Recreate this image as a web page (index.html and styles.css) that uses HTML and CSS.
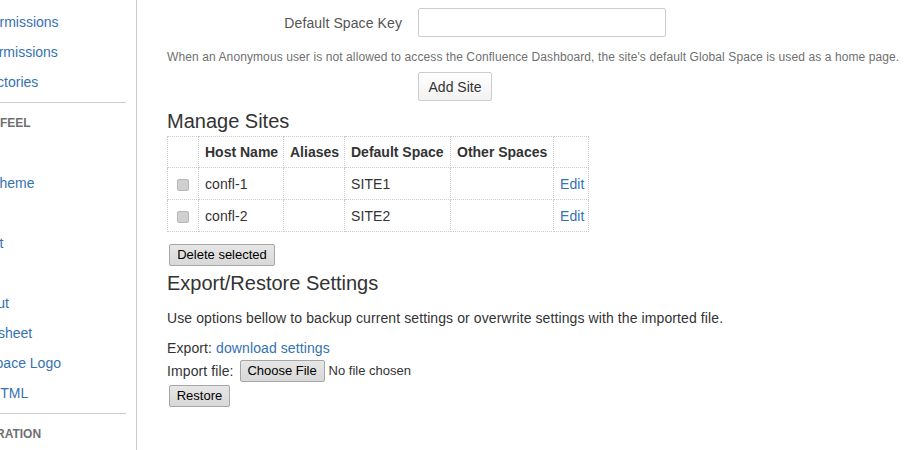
FILE: index.html
```html
<!DOCTYPE html>
<html lang="en">
<head>
  <meta charset="UTF-8"/>
  <title>Site Homepage Settings</title>
  <link rel="stylesheet" href="styles.css">
</head>
<body>
  <div class="page">
    <div class="sidebar">
      <div class="nav">
        <a class="nav-item" href="#">Security Configuration</a>
        <a class="nav-item" href="#">Global Permissions</a>
        <a class="nav-item" href="#">Space Permissions</a>
        <a class="nav-item" href="#">User Directories</a>
        <div class="nav-sep"></div>
        <div class="nav-head look">LOOK AND FEEL</div>
        <a class="nav-item" href="#">Themes</a>
        <a class="nav-item" href="#">Colour Scheme</a>
        <a class="nav-item" href="#">Layouts</a>
        <a class="nav-item" href="#">Stylesheet</a>
        <a class="nav-item" href="#">Site Logo</a>
        <a class="nav-item pdf" href="#">PDF Layout</a>
        <a class="nav-item pdf" href="#">PDF Stylesheet</a>
        <a class="nav-item" href="#">Default Space Logo</a>
        <a class="nav-item" href="#">Custom HTML</a>
        <div class="nav-sep"></div>
        <div class="nav-head">ADMINISTRATION</div>
      </div>
    </div>

    <div class="main">
      <div class="field">
        <label for="spaceKey">Default Space Key</label>
        <input type="text" id="spaceKey">
      </div>
      <div class="desc">When an Anonymous user is not allowed to access the Confluence Dashboard, the site's default Global Space is used as a home page.</div>
      <div class="add-row">
        <button class="aui-btn">Add Site</button>
      </div>

      <h2>Manage Sites</h2>
      <table class="sites">
        <colgroup>
          <col class="c-check">
          <col class="c-host">
          <col class="c-alias">
          <col class="c-space">
          <col class="c-other">
          <col class="c-edit">
        </colgroup>
        <tr>
          <th class="check"></th>
          <th>Host Name</th>
          <th>Aliases</th>
          <th>Default Space</th>
          <th>Other Spaces</th>
          <th></th>
        </tr>
        <tr>
          <td class="check"><span class="box"></span></td>
          <td>confl-1</td>
          <td></td>
          <td>SITE1</td>
          <td></td>
          <td><a href="#">Edit</a></td>
        </tr>
        <tr>
          <td class="check"><span class="box"></span></td>
          <td>confl-2</td>
          <td></td>
          <td>SITE2</td>
          <td></td>
          <td><a href="#">Edit</a></td>
        </tr>
      </table>
      <button class="native-btn delete-btn">Delete selected</button>

      <h2 class="export-title">Export/Restore Settings</h2>
      <p class="intro">Use options bellow to backup current settings or overwrite settings with the imported file.</p>
      <div class="line">Export: <a href="#">download settings</a></div>
      <div class="line import">
        Import file:
        <button class="native-btn choose-btn">Choose File</button>
        <span class="no-file">No file chosen</span>
      </div>
      <button class="native-btn restore-btn">Restore</button>
    </div>
  </div>
</body>
</html>
```

FILE: styles.css
```css
body {
  margin: 0;
  font-family: 'Liberation Sans', Arial, sans-serif;
  font-size: 14px;
  color: #333;
  background: #fff;
}
a {
  color: #3572b0;
  text-decoration: none;
}
.page {
  display: flex;
  height: 450px;
  overflow: hidden;
}

/* sidebar, scrolled and clipped on the left */
.sidebar {
  width: 136px;
  flex-shrink: 0;
  border-right: 1px solid #ccc;
  overflow: hidden;
}
.nav {
  width: 188px;
  margin-left: -62px;
  margin-top: -23px;
}
.nav-item {
  display: block;
  height: 30px;
  line-height: 30px;
  white-space: nowrap;
}
.nav-item.pdf {
  text-indent: -3px;
}
.nav-sep {
  height: 1px;
  background: #ccc;
  margin-top: 5px;
}
.nav-head {
  padding: 13px 0 8px;
  line-height: 14px;
  font-size: 12px;
  font-weight: bold;
  color: #707070;
  white-space: nowrap;
}
.nav-head.look {
  text-indent: -5px;
}

/* main content */
.main {
  padding-left: 30px;
  padding-top: 8px;
  flex: 1;
  letter-spacing: 0.1px;
}
.field {
  display: flex;
  align-items: center;
  gap: 16px;
}
.field label {
  width: 235px;
  text-align: right;
  color: #555;
}
.field input {
  box-sizing: border-box;
  width: 248px;
  height: 29px;
  padding: 0 5px;
  border: 1px solid #ccc;
  border-radius: 2px;
  margin: 0;
}
.desc {
  font-size: 12px;
  color: #707070;
  margin-top: 12px;
  line-height: 16px;
  white-space: nowrap;
}
.add-row {
  margin-top: 7px;
  padding-left: 251px;
}
.aui-btn {
  width: 74px;
  height: 29px;
  font-family: inherit;
  font-size: 14px;
  color: #333;
  background: linear-gradient(#fff, #f2f2f2);
  border: 1px solid #ccc;
  border-radius: 2px;
  padding: 0;
}
h2 {
  font-size: 20px;
  font-weight: normal;
  line-height: 24px;
  letter-spacing: 0;
  margin: 8px 0 3px;
  color: #333;
}

.sites {
  border-collapse: collapse;
  table-layout: fixed;
  width: 421px;
}
.c-check { width: 31px; }
.c-host { width: 85px; }
.c-alias { width: 61px; }
.c-space { width: 106px; }
.c-other { width: 103px; }
.c-edit { width: 35px; }
.sites th, .sites td {
  border: 1px dotted #ccc;
  padding: 0 6px;
  text-align: left;
  white-space: nowrap;
  overflow: hidden;
}
.sites th {
  height: 30px;
  font-weight: bold;
  letter-spacing: 0;
}
.sites td {
  height: 31px;
}
.sites .check {
  padding: 0;
  text-align: center;
}
.box {
  display: inline-block;
  width: 10px;
  height: 10px;
  border: 1px solid #b8b8b8;
  border-radius: 2px;
  background: #d0d0d0;
  vertical-align: middle;
}

.native-btn {
  font-family: inherit;
  font-size: 13px;
  letter-spacing: 0;
  color: #000;
  background: linear-gradient(#e6e6e6, #d8d8d8);
  border: 1px solid #a6a6a6;
  border-radius: 2px;
  padding: 0;
  height: 22px;
  line-height: 18px;
  white-space: nowrap;
}
.delete-btn {
  margin: 12px 0 0 2px;
  width: 106px;
}
.export-title {
  margin: 5px 0 0;
}
.intro {
  margin: 13px 0 0;
  line-height: 20px;
}
.line {
  margin-top: 10px;
  line-height: 20px;
}
.import {
  margin-top: 2px;
  display: flex;
  align-items: center;
  height: 22px;
}
.choose-btn {
  margin: 0 4px 0 6px;
  width: 85px;
}
.no-file {
  font-size: 13px;
  letter-spacing: 0;
}
.restore-btn {
  margin: 3px 0 0 2px;
  width: 61px;
}
```
